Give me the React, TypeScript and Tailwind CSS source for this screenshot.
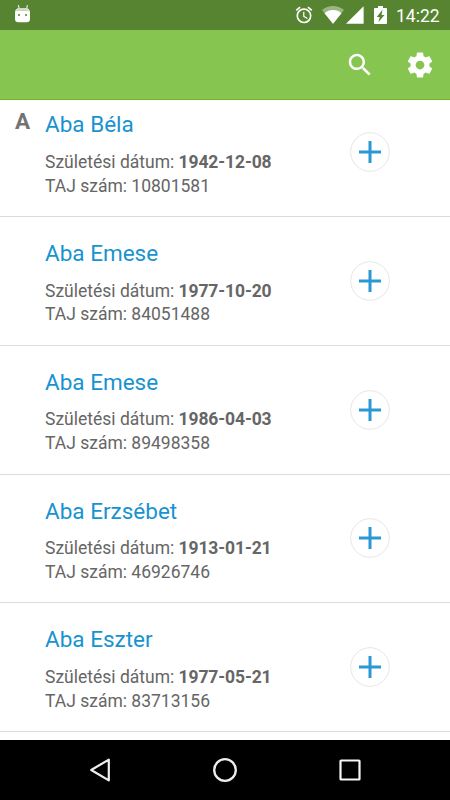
const patients = [
  { name: "Aba Béla", born: "1942-12-08", taj: "10801581", letter: "A" },
  { name: "Aba Emese", born: "1977-10-20", taj: "84051488" },
  { name: "Aba Emese", born: "1986-04-03", taj: "89498358" },
  { name: "Aba Erzsébet", born: "1913-01-21", taj: "46926746" },
  { name: "Aba Eszter", born: "1977-05-21", taj: "83713156" },
];

function StatusBar() {
  return (
    <div className="flex h-[30px] shrink-0 items-center bg-[#568430] pl-[14px] pr-[10px] text-white">
      <svg width="17" height="20" viewBox="0 0 17 20" className="-mt-1">
        <path d="M4.4 2 5.2 6M13.4 2 12.6 6" stroke="#dfe8d8" strokeWidth="1.2" />
        <path d="M1 9.2Q1.4 5.3 5 5.3h7q3.6 0 4 3.9V16q0 3.3-3.3 3.3H4.5Q1 19.3 1 16Z" fill="white" />
        <path d="M1.8 8Q2.5 5.3 5 5.3h7q2.5 0 3.2 2.7Z" fill="#cbd9bf" />
        <path d="M4 11h2v2H4zM11 11h2v2h-2z" fill="#7c9d61" />
      </svg>
      <div className="ml-auto flex items-center">
        <svg width="20" height="20" viewBox="0 0 24 24" fill="white">
          <path d="M22 5.72l-4.6-3.86-1.29 1.53 4.6 3.86L22 5.72zM7.88 3.39L6.6 1.86 2 5.71l1.29 1.53 4.59-3.85zM12.5 8H11v6l4.75 2.85.75-1.23-4-2.37V8zM12 4c-4.97 0-9 4.03-9 9s4.02 9 9 9a9 9 0 000-18zm0 16c-3.87 0-7-3.13-7-7s3.13-7 7-7 7 3.13 7 7-3.13 7-7 7z" />
        </svg>
        <svg width="22" height="20" viewBox="0 0 22 20" className="ml-2">
          <path d="M0 5.1Q5 1 11 1t11 4.1L11 18.7Z" fill="white" fillOpacity=".4" />
          <path d="M2.5 8.2Q6 5 11 5t8.5 3.2L11 18.7Z" fill="white" />
        </svg>
        <svg width="18" height="20" viewBox="0 0 18 20" className="ml-[2px]">
          <path d="M0 18.8 17.6 1.2v17.6Z" fill="white" />
        </svg>
        <svg width="13" height="20" viewBox="0 0 13 20" className="ml-[10px]">
          <path d="M4 1h5v2h3q1 0 1 1v14q0 1-1 1H1q-1 0-1-1V4q0-1 1-1h3Z" fill="white" />
          <path d="m8.5 4.8-5.8 7.2h3l-1.2 5 6-7.1h-3Z" fill="#568430" />
        </svg>
        <span className="ml-[9px] mt-px w-[44px] text-[17.5px] leading-[30px]">14:22</span>
      </div>
    </div>
  );
}

function Toolbar() {
  return (
    <div className="flex h-[70px] shrink-0 items-center justify-end border-b border-[#6fb51f] bg-[#85c550] pr-[15px]">
      <svg width="30" height="30" viewBox="0 0 24 24" fill="white">
        <path d="M15.5 14h-.79l-.28-.27C15.41 12.59 16 11.11 16 9.5 16 5.91 13.09 3 9.5 3S3 5.91 3 9.5 5.91 16 9.5 16c1.61 0 3.09-.59 4.23-1.57l.27.28v.79l5 4.99L20.49 19l-4.99-5zm-6 0C7.01 14 5 11.99 5 9.5S7.01 5 9.5 5 14 7.01 14 9.5 11.99 14 9.5 14z" />
      </svg>
      <svg width="30" height="30" viewBox="0 0 24 24" fill="white" className="ml-[30px]">
        <path d="M19.43 12.98c.04-.32.07-.64.07-.98s-.03-.66-.07-.98l2.11-1.65c.19-.15.24-.42.12-.64l-2-3.46c-.12-.22-.39-.3-.61-.22l-2.49 1c-.52-.4-1.08-.73-1.69-.98l-.38-2.65A.488.488 0 0014 2h-4c-.25 0-.46.18-.49.42l-.38 2.65c-.61.25-1.17.59-1.69.98l-2.49-1c-.23-.09-.49 0-.61.22l-2 3.46c-.13.22-.07.49.12.64l2.11 1.65c-.04.32-.07.65-.07.98s.03.66.07.98l-2.11 1.65c-.19.15-.24.42-.12.64l2 3.46c.12.22.39.3.61.22l2.49-1c.52.4 1.08.73 1.69.98l.38 2.65c.03.24.24.42.49.42h4c.25 0 .46-.18.49-.42l.38-2.65c.61-.25 1.17-.59 1.69-.98l2.49 1c.23.09.49 0 .61-.22l2-3.46c.12-.22.07-.49-.12-.64l-2.11-1.65zM12 15.5c-1.93 0-3.5-1.57-3.5-3.5s1.57-3.5 3.5-3.5 3.5 1.57 3.5 3.5-1.57 3.5-3.5 3.5z" />
      </svg>
    </div>
  );
}

function PatientRow({ name, born, taj, letter }: { name: string; born: string; taj: string; letter?: string }) {
  return (
    <li className="flex h-[128.75px] shrink-0 border-b border-[#dcdcdc]">
      <div className="w-[45px] shrink-0 pl-[15px] pt-5 text-[22.5px] font-bold leading-[26.4px] text-[#737373]">{letter}</div>
      <div className="w-[305px] shrink-0 pt-[23.2px] text-[17.5px] leading-[23.75px] text-[#666666]">
        <h2 className="mb-[13.1px] text-[22.5px] leading-[26.4px] text-[#1893d0]">{name}</h2>
        <p>
          Születési dátum: <b className="font-bold tracking-[-0.12px]">{born}</b>
        </p>
        <p>TAJ szám: {taj}</p>
      </div>
      <button className="mt-[43.75px] size-10" aria-label="+">
        <svg width="40" height="40" viewBox="0 0 40 40">
          <circle cx="20" cy="20" r="19.3" fill="white" stroke="#e6e6e6" />
          <path d="M20 9v22M9 20h22" stroke="#2b98d3" strokeWidth="3" />
        </svg>
      </button>
    </li>
  );
}

function NavBar() {
  return (
    <div className="flex h-[60px] shrink-0 items-center justify-between bg-black px-[85px]">
      <svg width="30" height="30" viewBox="0 0 30 30" fill="none" stroke="#eeeeee" strokeWidth="2.2" strokeLinejoin="round">
        <path d="M6.2 15 23.8 4.6v20.8Z" />
      </svg>
      <svg width="30" height="30" viewBox="0 0 30 30" fill="none" stroke="#eeeeee" strokeWidth="2.3">
        <circle cx="15" cy="15" r="10.8" />
      </svg>
      <svg width="30" height="30" viewBox="0 0 30 30" fill="none" stroke="#f5f5f5" strokeWidth="2.2">
        <rect x="5.5" y="5.5" width="19" height="19" rx="0.6" />
      </svg>
    </div>
  );
}

export default function App() {
  return (
    <div className="flex h-[800px] w-[450px] flex-col overflow-hidden bg-white font-['Roboto',sans-serif]">
      <StatusBar />
      <Toolbar />
      <main className="min-h-0 flex-1 overflow-hidden">
        <ul className="-mt-[11.75px] flex flex-col">
          {patients.map((p) => (
            <PatientRow key={p.taj} {...p} />
          ))}
        </ul>
      </main>
      <NavBar />
    </div>
  );
}
